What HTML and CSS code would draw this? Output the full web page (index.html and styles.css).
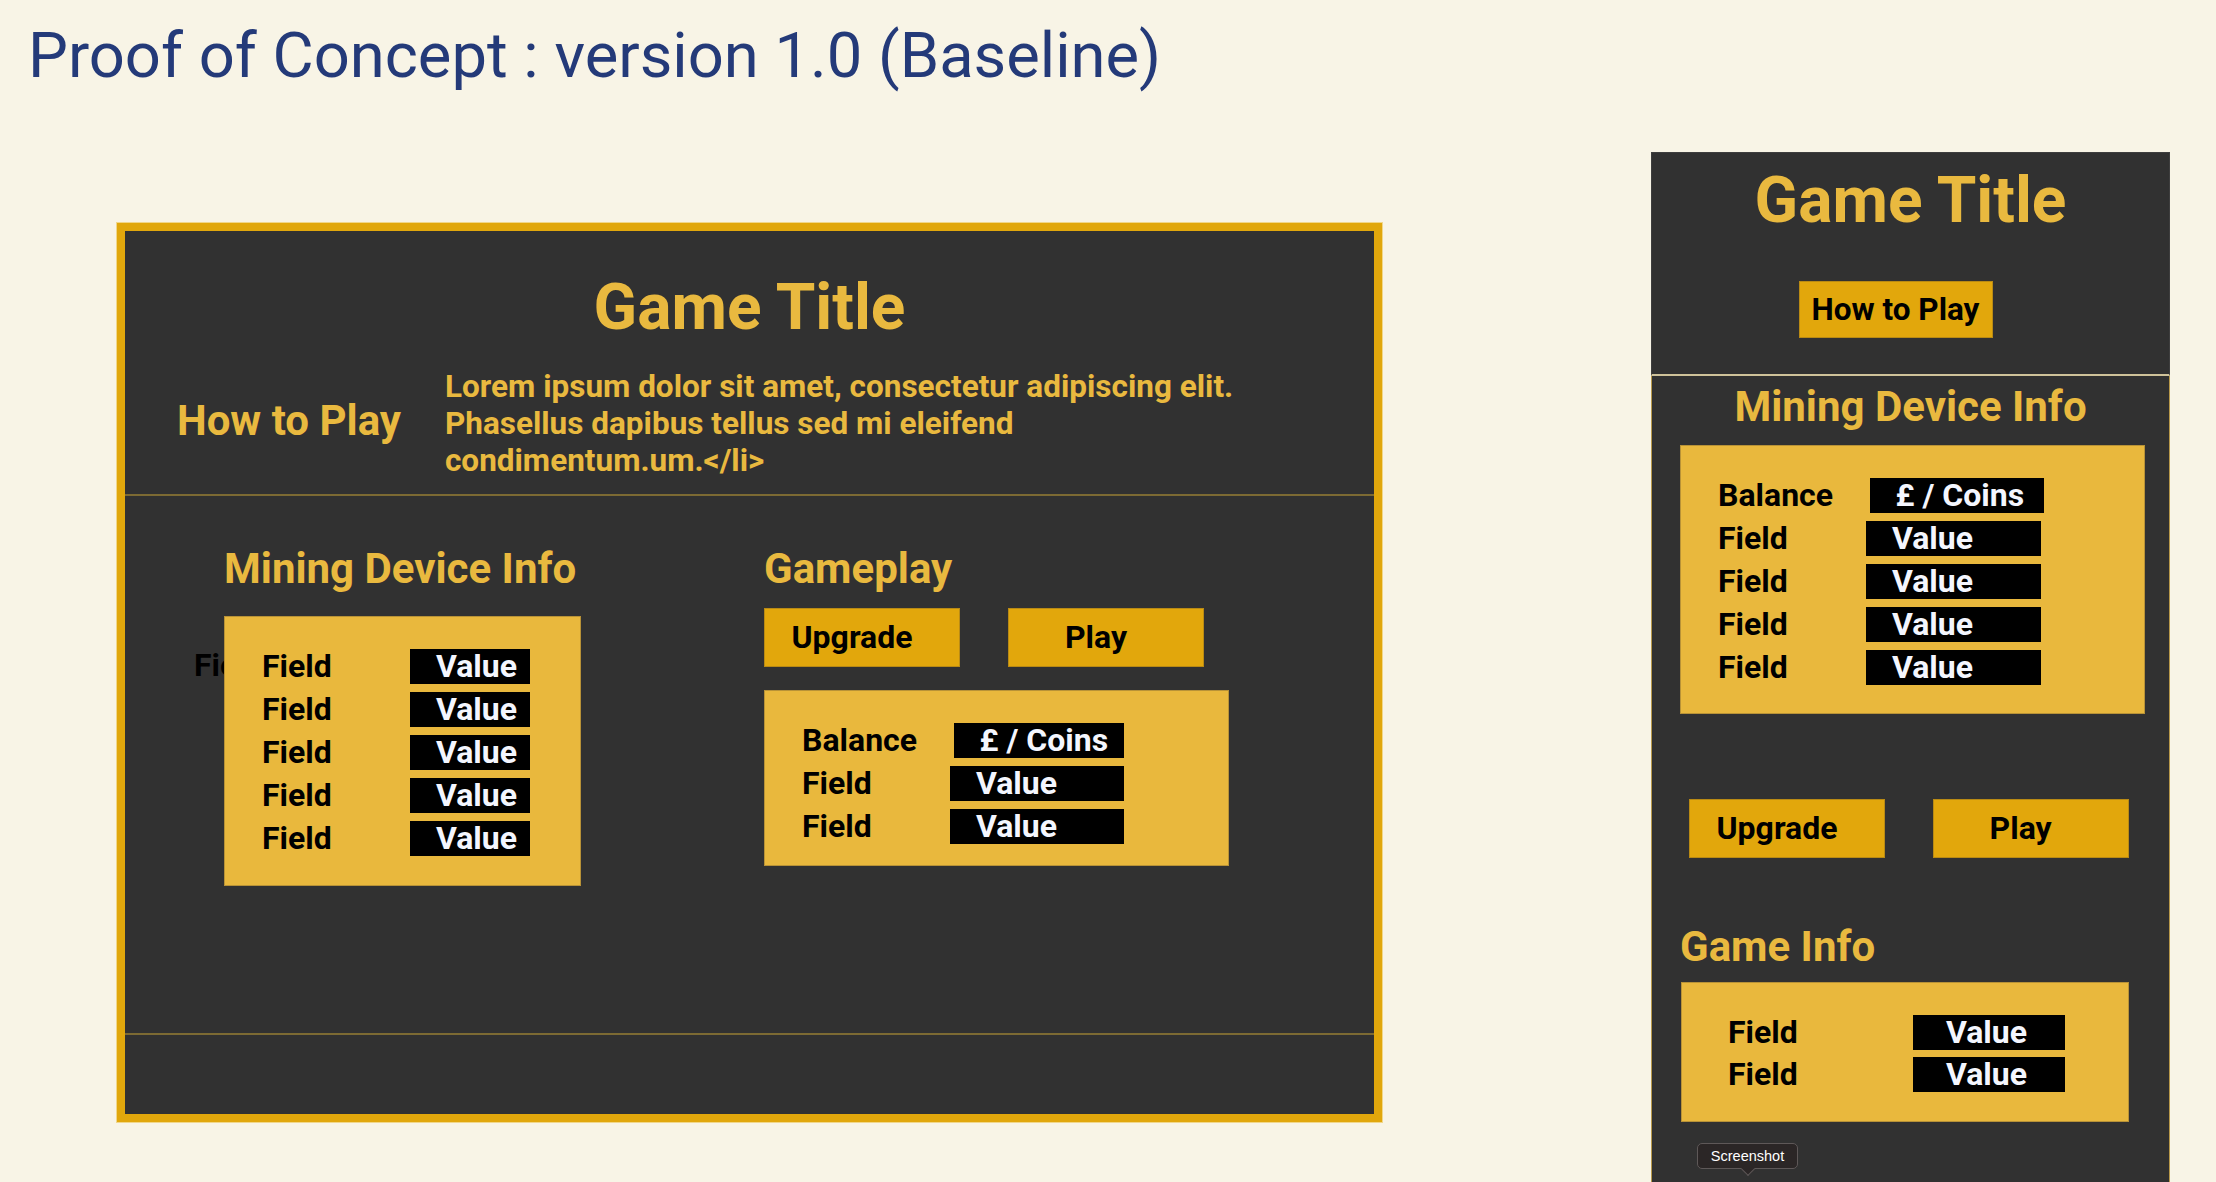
FILE: index.html
```html
<!DOCTYPE html>
<html lang="en">
<head>
<meta charset="utf-8">
<title>Proof of Concept : version 1.0 (Baseline)</title>
<link rel="stylesheet" href="styles.css">
</head>
<body>
<h1 class="page-title">Proof of Concept : version 1.0 (Baseline)</h1>
<div class="stage">
  <section class="frame">
    <header class="frame-head">
      <h2 class="game-title">Game Title</h2>
      <div class="howto">
        <h3 class="howto-title">How to Play</h3>
        <p class="howto-text">Lorem ipsum dolor sit amet, consectetur adipiscing elit.<br>Phasellus dapibus tellus sed mi eleifend<br>condimentum.um.&lt;/li&gt;</p>
      </div>
    </header>
    <main class="frame-main">
      <div class="col col-mining">
        <h3 class="sec-title">Mining Device Info</h3>
        <div class="stack">
          <span class="stray">Field</span>
          <div class="info-box info-box--mining">
            <div class="row"><span class="label">Field</span><span class="value">Value</span></div>
            <div class="row"><span class="label">Field</span><span class="value">Value</span></div>
            <div class="row"><span class="label">Field</span><span class="value">Value</span></div>
            <div class="row"><span class="label">Field</span><span class="value">Value</span></div>
            <div class="row"><span class="label">Field</span><span class="value">Value</span></div>
          </div>
        </div>
      </div>
      <div class="col col-gameplay">
        <h3 class="sec-title">Gameplay</h3>
        <div class="btn-row">
          <button class="btn">Upgrade</button>
          <button class="btn">Play</button>
        </div>
        <div class="info-box info-box--gameplay">
          <div class="row"><span class="label">Balance</span><span class="value value--coins">£ / Coins</span></div>
          <div class="row"><span class="label">Field</span><span class="value">Value</span></div>
          <div class="row"><span class="label">Field</span><span class="value">Value</span></div>
        </div>
      </div>
    </main>
    <footer class="frame-foot"></footer>
  </section>

  <aside class="panel">
    <header class="panel-head">
      <h2 class="game-title">Game Title</h2>
      <div class="panel-howto">
        <button class="btn btn--howto">How to Play</button>
      </div>
    </header>
    <div class="panel-body">
      <h3 class="sec-title sec-title--center">Mining Device Info</h3>
      <div class="info-box info-box--panel">
        <div class="row"><span class="label">Balance</span><span class="value value--coins">£ / Coins</span></div>
        <div class="row"><span class="label">Field</span><span class="value">Value</span></div>
        <div class="row"><span class="label">Field</span><span class="value">Value</span></div>
        <div class="row"><span class="label">Field</span><span class="value">Value</span></div>
        <div class="row"><span class="label">Field</span><span class="value">Value</span></div>
      </div>
      <div class="btn-row btn-row--panel">
        <button class="btn">Upgrade</button>
        <button class="btn">Play</button>
      </div>
      <h3 class="sec-title sec-title--gameinfo">Game Info</h3>
      <div class="info-box info-box--gameinfo">
        <div class="row"><span class="label">Field</span><span class="value">Value</span></div>
        <div class="row"><span class="label">Field</span><span class="value">Value</span></div>
      </div>
      <div class="tooltip">Screenshot</div>
    </div>
  </aside>
</div>
</body>
</html>
```

FILE: styles.css
```css
* {
  box-sizing: border-box;
}

html,
body {
  margin: 0;
}

body {
  background: #f8f4e6;
  font-family: Roboto, "Liberation Sans", sans-serif;
  overflow: hidden;
}

.page-title {
  margin: 0;
  padding: 18px 0 0 28px;
  font-size: 63.3px;
  line-height: 75px;
  font-weight: 400;
  color: #243a79;
}

.stage {
  display: flex;
  align-items: flex-start;
  margin-top: 59px;
  padding-left: 117px;
  gap: 269px;
}

/* ---------- desktop frame ---------- */
.frame {
  margin-top: 71px;
  width: 1265px;
  border: 8px solid #e1a70c;
  box-shadow: 0 0 0 1px #f1d78a;
  background: #313131;
  display: flex;
  flex-direction: column;
}

.frame-head {
  padding: 38.6px 0 15px;
  border-bottom: 2px solid #7c6a33;
}

.game-title {
  margin: 0;
  text-align: center;
  font-size: 64px;
  line-height: 75px;
  font-weight: 700;
  color: #e9b93f;
}

.howto {
  display: flex;
  align-items: center;
  margin-top: 23px;
  padding-left: 52px;
  gap: 44px;
}

.howto-title {
  margin: 0 0 5px;
  font-size: 42px;
  line-height: 49px;
  font-weight: 700;
  color: #e9b93f;
}

.howto-text {
  margin: 0;
  font-size: 31.5px;
  line-height: 37px;
  font-weight: 700;
  color: #e9b93f;
}

.frame-main {
  height: 539px;
  border-bottom: 2px solid #7c6a33;
  padding: 48px 0 0 99px;
  display: flex;
  align-items: flex-start;
  gap: 183px;
}

.frame-foot {
  height: 79px;
}

.sec-title {
  margin: 0;
  font-size: 42px;
  line-height: 49px;
  font-weight: 700;
  color: #e9b93f;
}

.stack {
  display: grid;
  margin-top: 23px;
}

.stack > * {
  grid-area: 1 / 1;
}

.stray {
  justify-self: start;
  align-self: start;
  margin: 32.6px 0 0 -30px;
  font-size: 32px;
  line-height: 35px;
  font-weight: 700;
  color: #000;
}

/* ---------- info boxes ---------- */
.info-box {
  z-index: 1;
  background: #e9b83d;
  border: 1px solid #b89237;
  display: flex;
  flex-direction: column;
  gap: 8px;
}

.row {
  display: flex;
  align-items: center;
  height: 35px;
}

.label {
  width: 148px;
  flex: none;
  font-size: 32px;
  line-height: 35px;
  font-weight: 700;
  color: #000;
}

.value {
  flex: none;
  width: 120px;
  height: 35px;
  padding-left: 26px;
  background: #000;
  color: #f4f6fe;
  font-size: 32px;
  line-height: 35px;
  font-weight: 700;
  white-space: nowrap;
}

.info-box--mining {
  width: 357px;
  padding: 32px 0 29px 37px;
}

.info-box--gameplay {
  width: 465px;
  margin-top: 23px;
  padding: 32px 0 21px 37px;
}

.info-box--gameplay .value {
  width: 174px;
}

.info-box--gameplay .value--coins,
.info-box--panel .value--coins {
  width: 170px;
  margin-left: 3.5px;
}

/* ---------- buttons ---------- */
.btn-row {
  display: flex;
  gap: 48px;
  margin-top: 15px;
}

.btn {
  width: 196px;
  height: 59px;
  padding: 0 20px 0 0;
  margin: 0;
  background: #e2a70c;
  border: 1px solid #b98a14;
  border-radius: 0;
  font-family: Roboto, "Liberation Sans", sans-serif;
  font-size: 32px;
  line-height: 57px;
  font-weight: 700;
  color: #000;
  text-align: center;
}

/* ---------- mobile panel ---------- */
.panel {
  width: 519px;
  flex: none;
}

.panel-head {
  background: #313131;
  border: 1px solid #3e3e3e;
  border-bottom: 2px solid #cfc29a;
  padding: 10px 0 36px;
}

.panel-howto {
  display: flex;
  justify-content: center;
  padding-right: 29px;
  margin-top: 43px;
}

.btn--howto {
  width: auto;
  height: 57px;
  padding: 0 13px 0 12px;
  font-size: 31.5px;
  line-height: 55px;
}

.panel-body {
  position: relative;
  background: #313131;
  border-left: 1px solid #b8994a;
  border-right: 1px solid #b8994a;
  padding: 6px 0 120px;
}

.sec-title--center {
  text-align: center;
}

.info-box--panel {
  width: 465px;
  margin: 14px 0 0 28px;
  padding: 32px 0 28px 37px;
}

.info-box--panel .value {
  width: 174.5px;
}

.btn-row--panel {
  margin-top: 85px;
  padding-left: 37px;
  gap: 47.6px;
}

.sec-title--gameinfo {
  margin: 64px 0 0 28px;
}

.info-box--gameinfo {
  width: 448px;
  margin: 11px 0 0 29px;
  padding: 32px 0 29px 46px;
  gap: 6.5px;
}

.info-box--gameinfo .label {
  width: 185px;
}

.info-box--gameinfo .value {
  width: 152px;
  padding-left: 33px;
}

.tooltip {
  position: absolute;
  left: 45px;
  top: 767px;
  width: 101px;
  height: 26px;
  background: #2b2626;
  border: 1px solid #5e5858;
  border-radius: 5px;
  color: #fff;
  font-family: "Liberation Sans", Arial, sans-serif;
  font-size: 14.5px;
  line-height: 24px;
  text-align: center;
}

.tooltip::after {
  content: "";
  position: absolute;
  left: 50%;
  bottom: -6px;
  width: 9px;
  height: 9px;
  margin-left: -5px;
  background: #2b2626;
  border-right: 1px solid #5e5858;
  border-bottom: 1px solid #5e5858;
  transform: rotate(45deg);
}
```
